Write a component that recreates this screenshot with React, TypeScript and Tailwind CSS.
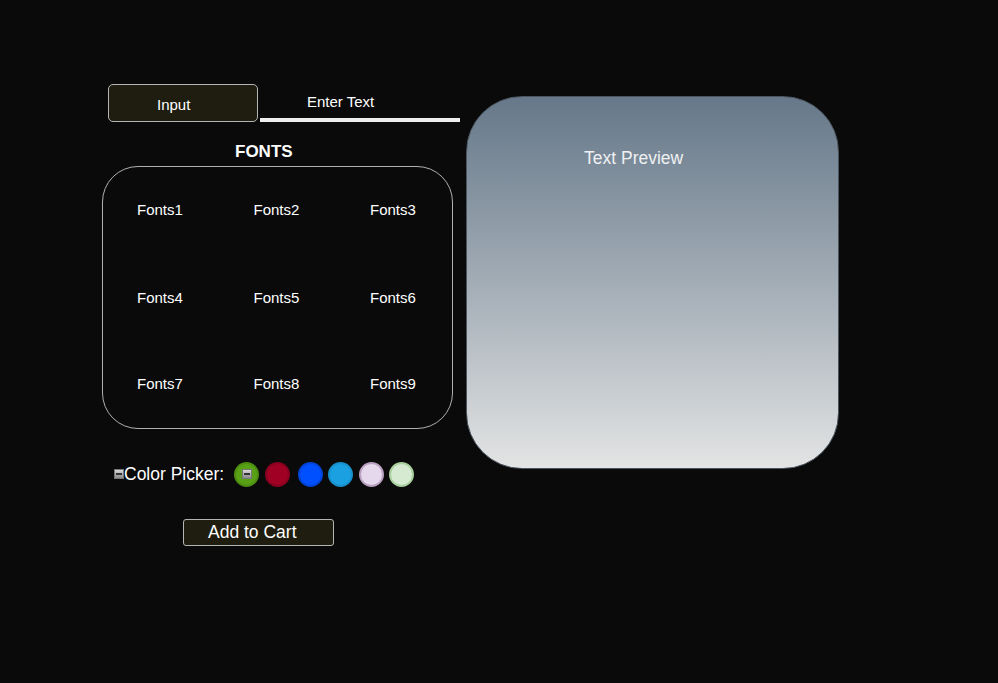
import React from "react";

const BrokenImg = () => (
  <span className="inline-flex w-[10px] h-[10px] bg-gradient-to-b from-[#d8d8d8] to-[#8a8a8a] border border-[#777] items-center justify-center">
    <span className="block w-[6px] h-[2px] bg-[#333]" />
  </span>
);

export default function App() {
  const rows = [
    { items: ["Fonts1", "Fonts2", "Fonts3"], cls: "" },
    { items: ["Fonts4", "Fonts5", "Fonts6"], cls: "mt-[72px]" },
    { items: ["Fonts7", "Fonts8", "Fonts9"], cls: "mt-[70px]" },
  ];
  return (
    <div className="w-[998px] h-[683px] bg-[#0a0a0a] text-white font-['Liberation_Sans',Arial,sans-serif] overflow-hidden">
      <div className="flex pt-[84px]">
        <div className="flex flex-col w-[466px]">
          <div className="flex items-end pl-[108px]">
            <div className="w-[150px] h-[38px] rounded-[5px] border border-[#b5b5b5] bg-[#1f1d0f] flex items-center pl-[48px] pt-[4px] text-[15px]">
              Input
            </div>
            <div className="ml-[2px] w-[200px] h-[38px] border-b-4 border-[#eeeeee] text-[15px] pl-[47px] pt-[7px]">
              Enter Text
            </div>
          </div>
          <div className="pl-[235px] mt-[21px] text-[17px] font-bold leading-[18px]">FONTS</div>
          <div className="ml-[102px] mt-[5px] w-[351px] h-[263px] rounded-[36px] border border-[#b0b0b0] flex flex-col pl-[34px] pt-[35px]">
            {rows.map((r, i) => (
              <div key={i} className={"flex text-[15px] leading-[16px] " + r.cls}>
                {r.items.map((f) => (
                  <div key={f} className="w-[116.5px] shrink-0">{f}</div>
                ))}
              </div>
            ))}
          </div>
          <div className="flex items-center pl-[114px] mt-[32px] h-[26px]">
            <BrokenImg />
            <span className="text-[17.5px]">Color Picker:</span>
            <div className="ml-[10px] w-[25px] h-[25px] rounded-full bg-[#58a014] border-2 border-[#4d8d12] flex items-center justify-center">
              <BrokenImg />
            </div>
            <div className="ml-[6px] w-[25px] h-[25px] rounded-full bg-[#a00024] border-2 border-[#8a0020]" />
            <div className="ml-[8px] w-[25px] h-[25px] rounded-full bg-[#0050ff] border-2 border-[#0044d8]" />
            <div className="ml-[5px] w-[25px] h-[25px] rounded-full bg-[#1ba0e2] border-2 border-[#1890cc]" />
            <div className="ml-[6px] w-[25px] h-[25px] rounded-full bg-[#e6d8ec] border-2 border-[#b9a0c0]" />
            <div className="ml-[5px] w-[25px] h-[25px] rounded-full bg-[#d6ead2] border-2 border-[#a8cf9c]" />
          </div>
          <div className="ml-[183px] mt-[32px] w-[151px] h-[27px] rounded-[3px] border border-[#b5b5b5] bg-[#1f1d0f] flex items-center pl-[24px] text-[17.5px]">
            Add to Cart
          </div>
        </div>
        <div className="mt-[12px] w-[373px] h-[373px] rounded-[56px] border border-[#4a5560] bg-gradient-to-b from-[#667889] to-[#e3e4e4] pl-[117px] pt-[48px]">
          <div className="text-[17.5px] text-[#eef0f2]">Text Preview</div>
        </div>
      </div>
    </div>
  );
}
